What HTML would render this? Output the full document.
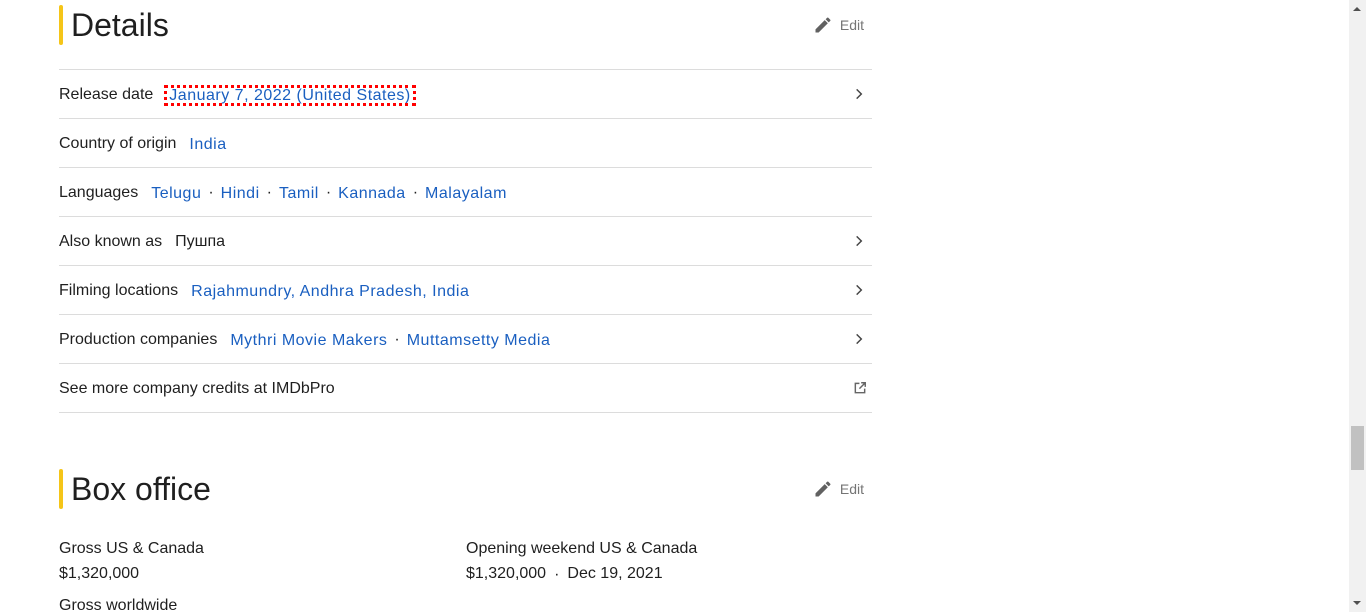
<!DOCTYPE html>
<html><head><meta charset="utf-8"><style>
html,body{margin:0;padding:0;width:1366px;height:612px;overflow:hidden;background:#fff;font-family:"Liberation Sans",Arial,sans-serif;}
.h{position:absolute;left:59px;width:813px;height:40px;}
.h .bar{position:absolute;left:0;top:0;width:4px;height:40px;background:#f5c518;border-radius:2px;}
.h .t{position:absolute;left:12px;top:0;font-size:32px;line-height:40px;color:#1f1f1f;}
.edit{position:absolute;right:8px;top:10px;font-size:14px;color:#757575;line-height:20px;}
.edit svg{position:absolute;left:-27px;top:0;}
.row{position:absolute;left:59px;width:813px;height:49px;border-top:1px solid #dcdcdc;font-size:16px;color:#1f1f1f;line-height:48px;white-space:nowrap;}
.row .l{margin-right:13px;position:relative;top:1px;}
.a{color:#1a5fc0;font-size:16px;letter-spacing:0.5px;position:relative;top:2px;}
.d{color:#1f1f1f;margin:0 7px;position:relative;top:1px;}
.chev{position:absolute;right:6px;top:17px;}
.last{position:absolute;left:59px;top:412px;width:813px;border-top:1px solid #dcdcdc;}
.bo{position:absolute;font-size:16px;color:#1f1f1f;line-height:20px;}
.sb{position:absolute;left:1349px;top:0;width:17px;height:612px;background:#f1f1f1;}
.th{position:absolute;left:1351px;top:426px;width:13px;height:44px;background:#c1c1c1;}
</style></head><body>
<div class="h" style="top:5px"><div class="bar"></div><div class="t">Details</div>
<div class="edit"><svg width="20" height="20" viewBox="0 0 24 24"><path fill="#616161" d="M3 17.25V21h3.75L17.81 9.94l-3.75-3.75L3 17.25zM20.71 7.04a1 1 0 0 0 0-1.41l-2.34-2.34a1 1 0 0 0-1.41 0l-1.83 1.83 3.75 3.75 1.83-1.83z"/></svg>Edit</div></div>

<div class="row" style="top:69px"><span class="l">Release date</span><span class="a" style="outline:3px dotted #f00;outline-offset:-1px;padding:0 3px">January 7, 2022 (United States)</span><svg class="chev" width="14" height="14" viewBox="0 0 24 24"><path fill="none" stroke="#444" stroke-width="2.5" d="M8 4l8 8-8 8"/></svg></div>
<div class="row" style="top:118px"><span class="l">Country of origin</span><span class="a">India</span></div>
<div class="row" style="top:167px"><span class="l">Languages</span><span class="a">Telugu</span><span class="d">·</span><span class="a">Hindi</span><span class="d">·</span><span class="a">Tamil</span><span class="d">·</span><span class="a">Kannada</span><span class="d">·</span><span class="a">Malayalam</span></div>
<div class="row" style="top:216px"><span class="l">Also known as</span><span style="position:relative;top:1px">Пушпа</span><svg class="chev" width="14" height="14" viewBox="0 0 24 24"><path fill="none" stroke="#444" stroke-width="2.5" d="M8 4l8 8-8 8"/></svg></div>
<div class="row" style="top:265px"><span class="l">Filming locations</span><span class="a">Rajahmundry, Andhra Pradesh, India</span><svg class="chev" width="14" height="14" viewBox="0 0 24 24"><path fill="none" stroke="#444" stroke-width="2.5" d="M8 4l8 8-8 8"/></svg></div>
<div class="row" style="top:314px"><span class="l">Production companies</span><span class="a">Mythri Movie Makers</span><span class="d">·</span><span class="a">Muttamsetty Media</span><svg class="chev" width="14" height="14" viewBox="0 0 24 24"><path fill="none" stroke="#444" stroke-width="2.5" d="M8 4l8 8-8 8"/></svg></div>
<div class="row" style="top:363px"><span style="position:relative;top:1px">See more company credits at IMDbPro</span><svg style="position:absolute;right:5px;top:17px" width="14" height="14" viewBox="0 0 24 24"><path fill="none" stroke="#666" stroke-width="2.5" d="M11 4H4v16h16v-7M14 3h7v7M21 3L11 13"/></svg></div>
<div class="last"></div>

<div class="h" style="top:469px"><div class="bar"></div><div class="t">Box office</div>
<div class="edit"><svg width="20" height="20" viewBox="0 0 24 24"><path fill="#616161" d="M3 17.25V21h3.75L17.81 9.94l-3.75-3.75L3 17.25zM20.71 7.04a1 1 0 0 0 0-1.41l-2.34-2.34a1 1 0 0 0-1.41 0l-1.83 1.83 3.75 3.75 1.83-1.83z"/></svg>Edit</div></div>
<div class="bo" style="left:59px;top:539px">Gross US &amp; Canada</div>
<div class="bo" style="left:59px;top:564px">$1,320,000</div>
<div class="bo" style="left:59px;top:596px">Gross worldwide</div>
<div class="bo" style="left:466px;top:539px">Opening weekend US &amp; Canada</div>
<div class="bo" style="left:466px;top:564px">$1,320,000<span class="d" style="margin:0 8px">·</span>Dec 19, 2021</div>

<div class="sb"></div><div class="th"></div>
<div style="position:absolute;left:1353px;top:7px;width:0;height:0;border-left:4px solid transparent;border-right:4px solid transparent;border-bottom:4px solid #505050"></div>
<div style="position:absolute;left:1353px;top:601px;width:0;height:0;border-left:4px solid transparent;border-right:4px solid transparent;border-top:4px solid #505050"></div>
</body></html>
